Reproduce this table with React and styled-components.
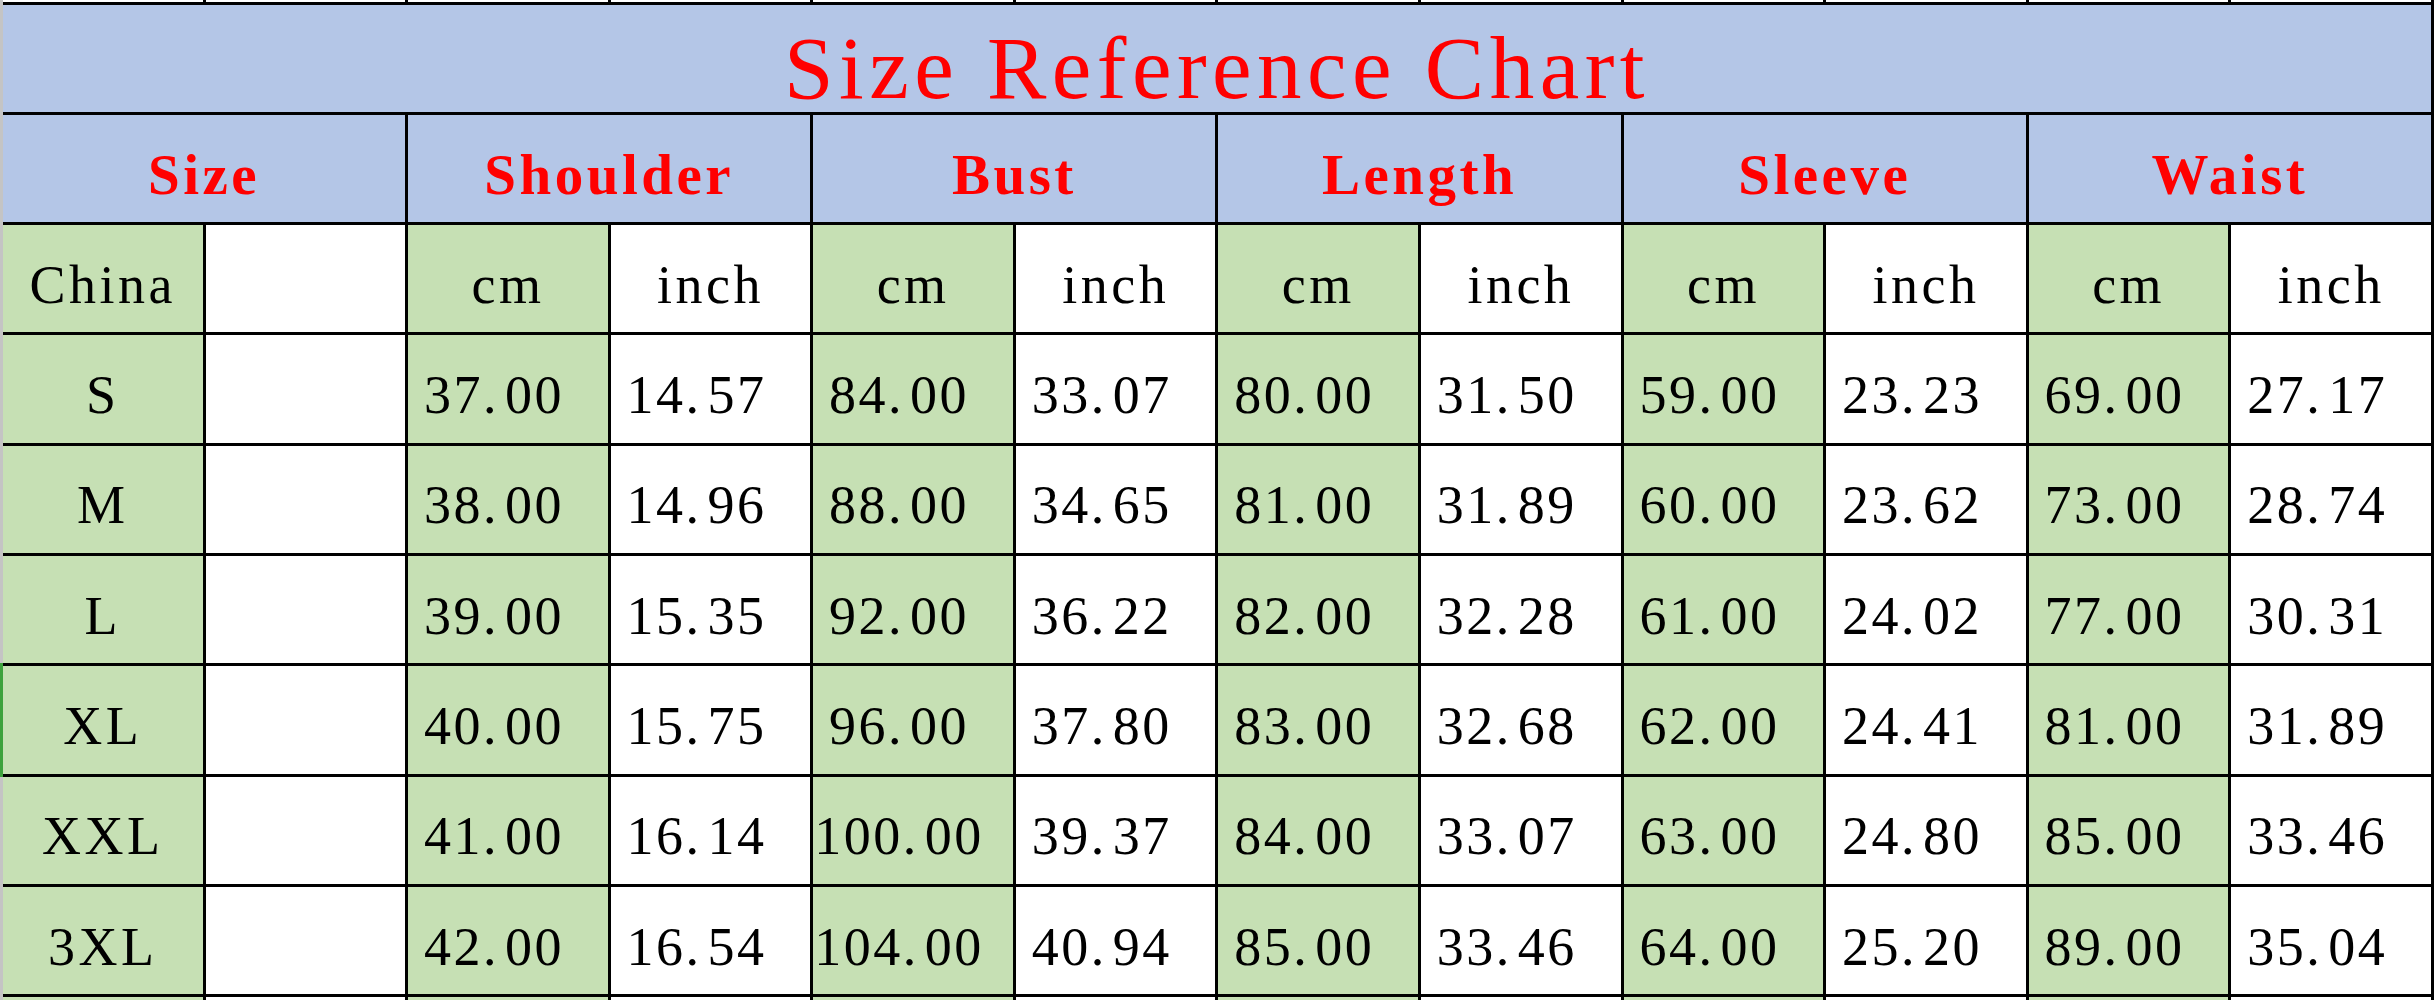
import React from "react";
import styled, { createGlobalStyle } from "styled-components";

const ROW_H = 107.3;
const LINE = 3;
const CUT_TOP = 1.6;

const colors = {
  blue: "#b4c6e7",
  green: "#c6e0b4",
  white: "#ffffff",
  red: "#ff0000",
};

const GlobalStyle = createGlobalStyle`
  html, body {
    margin: 0;
    padding: 0;
    background: #fff;
    overflow: hidden;
  }
`;

const Page = styled.div`
  display: flex;
  align-items: flex-start;
  width: 2436px;
  height: 1000px;
  overflow: hidden;
  background: #fff;
  font-family: "Liberation Serif", "Times New Roman", serif;
`;

// row header edge of the spreadsheet, green where the selected row is
const Gutter = styled.div`
  display: flex;
  flex-direction: column;
  width: 3px;
  height: 1000px;
  flex-shrink: 0;
`;

const GutterSeg = styled.div`
  flex: ${(p) => (p.$h ? "none" : "1")};
  height: ${(p) => (p.$h ? `${p.$h}px` : "auto")};
  background: ${(p) => (p.$active ? "#3da23d" : "#c4c4c4")};
`;

const Sheet = styled.div`
  flex: 1;
  margin-right: 2px;
  display: grid;
  grid-template-columns: repeat(12, 1fr);
  grid-template-rows: ${CUT_TOP}px repeat(9, ${ROW_H}px) 20px;
  gap: ${LINE}px;
  padding-right: ${LINE}px;
  background: #000;
`;

const Cell = styled.div`
  grid-column: span ${(p) => p.$span || 1};
  display: flex;
  align-items: center;
  justify-content: center;
  box-sizing: border-box;
  min-height: 0;
  overflow: hidden;
  white-space: nowrap;
  line-height: 1;
  background: ${(p) => colors[p.$tone || "white"]};
  color: #000;
  font-size: 54px;
  letter-spacing: ${(p) => (p.$num ? "2.5px" : "3.5px")};
  padding-top: 12px;
  padding-right: ${(p) => (p.$num ? "28px" : "0")};
`;

const CutCell = styled.div`
  background: ${(p) => colors[p.$tone || "white"]};
  min-height: 0;
`;

const TitleCell = styled(Cell)`
  color: ${colors.red};
  font-size: 89px;
  letter-spacing: 5.5px;
  line-height: 0.8;
  padding-top: 20px;
  overflow: visible;
`;

const HeadCell = styled(Cell)`
  color: ${colors.red};
  font-size: 57px;
  font-weight: bold;
  letter-spacing: 3.5px;
`;

const Dot = styled.span`
  margin-right: 6px;
`;

const measures = ["Shoulder", "Bust", "Length", "Sleeve", "Waist"];

const rows = [
  ["S", "37.00", "14.57", "84.00", "33.07", "80.00", "31.50", "59.00", "23.23", "69.00", "27.17"],
  ["M", "38.00", "14.96", "88.00", "34.65", "81.00", "31.89", "60.00", "23.62", "73.00", "28.74"],
  ["L", "39.00", "15.35", "92.00", "36.22", "82.00", "32.28", "61.00", "24.02", "77.00", "30.31"],
  ["XL", "40.00", "15.75", "96.00", "37.80", "83.00", "32.68", "62.00", "24.41", "81.00", "31.89"],
  ["XXL", "41.00", "16.14", "100.00", "39.37", "84.00", "33.07", "63.00", "24.80", "85.00", "33.46"],
  ["3XL", "42.00", "16.54", "104.00", "40.94", "85.00", "33.46", "64.00", "25.20", "89.00", "35.04"],
];

const toneFor = (col) => (col % 2 === 0 ? "green" : "white");

function Num({ value }) {
  const [whole, frac] = value.split(".");
  return (
    <>
      {whole}
      <Dot>.</Dot>
      {frac}
    </>
  );
}

const COLS = Array.from({ length: 12 }, (_, i) => i);
const SELECTED_ROW = 3;

export default function App() {
  const greenTop = CUT_TOP + LINE + (3 + SELECTED_ROW) * (ROW_H + LINE) - LINE;

  return (
    <>
      <GlobalStyle />
      <Page>
        <Gutter>
          <GutterSeg $h={greenTop} />
          <GutterSeg $h={ROW_H + LINE * 2} $active />
          <GutterSeg />
        </Gutter>

        <Sheet>
          {COLS.map((c) => (
            <CutCell key={`top-${c}`} $tone="white" />
          ))}

          <TitleCell $span={12} $tone="blue">
            Size Reference Chart
          </TitleCell>

          <HeadCell $span={2} $tone="blue">
            Size
          </HeadCell>
          {measures.map((m) => (
            <HeadCell key={m} $span={2} $tone="blue">
              {m}
            </HeadCell>
          ))}

          <Cell $tone="green">China</Cell>
          <Cell $tone="white" />
          {measures.map((m) => (
            <React.Fragment key={`unit-${m}`}>
              <Cell $tone="green">cm</Cell>
              <Cell $tone="white">inch</Cell>
            </React.Fragment>
          ))}

          {rows.map(([size, ...values]) => (
            <React.Fragment key={size}>
              <Cell $tone="green">{size}</Cell>
              <Cell $tone="white" />
              {values.map((v, i) => (
                <Cell key={i} $tone={toneFor(i + 2)} $num>
                  <Num value={v} />
                </Cell>
              ))}
            </React.Fragment>
          ))}

          {COLS.map((c) => (
            <CutCell key={`bottom-${c}`} $tone={toneFor(c)} />
          ))}
        </Sheet>
      </Page>
    </>
  );
}
